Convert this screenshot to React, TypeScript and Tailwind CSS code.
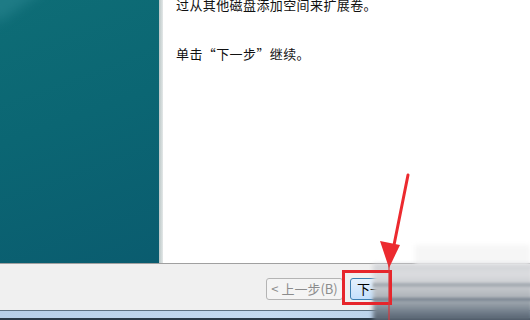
import React from 'react'

const cjk = { fontFamily: '"Noto Sans CJK SC", "Noto Sans", sans-serif' }

function SidePanel() {
  return (
    <div className="relative w-[159px] h-full bg-[linear-gradient(160deg,#0e6d76_0%,#0b6673_45%,#0a5c6f_100%)] overflow-hidden">
      <div className="absolute -left-[20px] -top-[30px] w-[60px] h-[40px] rotate-[-35deg] bg-[#2a8590] opacity-60 blur-[6px]" />
    </div>
  )
}

function WizardButton({ label, active }: { label: string; active?: boolean }) {
  return (
    <div
      className={
        active
          ? 'h-[22px] w-[77px] rounded-[3px] border border-[#3c7fb1] bg-[linear-gradient(#e5f1fc,#c4e0fc)] text-[13px] text-black flex items-center pl-[6px]'
          : 'h-[22px] w-[77px] rounded-[3px] border border-[#b4b4b4] bg-[#f4f4f4] text-[13px] text-[#8c8c8c] flex items-center justify-center'
      }
      style={cjk}
    >
      {label}
    </div>
  )
}

export default function App() {
  return (
    <div className="relative w-[530px] h-[320px] overflow-hidden bg-white">
      <div className="flex h-[263px]">
        <SidePanel />
        <div className="w-[4px] bg-[linear-gradient(90deg,#b9c6c6,#e4e8e8)]" />
        <div className="flex-1 bg-white pl-[13px] text-[13px] leading-[20px] tracking-[0.4px] text-[#111]" style={cjk}>
          <p className="-mt-[5px]">过从其他磁盘添加空间来扩展卷。</p>
          <p className="mt-[29px]">单击“下一步”继续。</p>
        </div>
      </div>
      <div className="h-[47px] border-t border-[#a0a0a0] bg-[#f0f0f0] flex items-center gap-[7px] pl-[266px] pt-[4px]">
        <WizardButton label="< 上一步(B)" />
        <WizardButton label="下一步(N) >" active />
      </div>
      <div className="h-[1px] bg-[#5d7182]" />
      <div className="h-[7px] bg-[linear-gradient(90deg,#b7cfe8,#c4daf0_50%,#b3cce6)]" />
      <div className="h-[2px] bg-[#2b3a48]" />

      {/* watermark blur */}
      <div className="absolute left-[415px] top-[245px] w-[115px] h-[20px] bg-[#f6f6f6] blur-[2px]" />
      <div className="absolute left-[373px] top-[264px] w-[160px] h-[58px] bg-[linear-gradient(180deg,#d0d2d6_0%,#dcdde0_18%,#c9ccd0_35%,#b9bdc2_50%,#97a0a9_68%,#6a7684_86%,#4f5b68_100%)] blur-[2px]" />
      <div className="absolute left-[373px] top-[283px] w-[160px] h-[4px] bg-[#a7adb4] blur-[1px]" />
      <div className="absolute left-[373px] top-[298px] w-[160px] h-[3px] bg-[#7e8894] blur-[1px]" />

      {/* red highlight box */}
      <div className="absolute left-[342px] top-[270px] w-[50px] h-[35px] border-[3px] border-[#e6252b]" />

      {/* red arrow */}
      <svg className="absolute left-0 top-0" width="530" height="320" viewBox="0 0 530 320">
        <path d="M408 175 L393 250" stroke="#ec2a2f" strokeWidth="3" strokeLinecap="round" />
        <path d="M380 241 L389 268 L400 245 Z" fill="#ec2a2f" />
        <path d="M389 262 L389 320" stroke="#d8383c" strokeWidth="2" opacity="0.6" />
      </svg>
    </div>
  )
}
